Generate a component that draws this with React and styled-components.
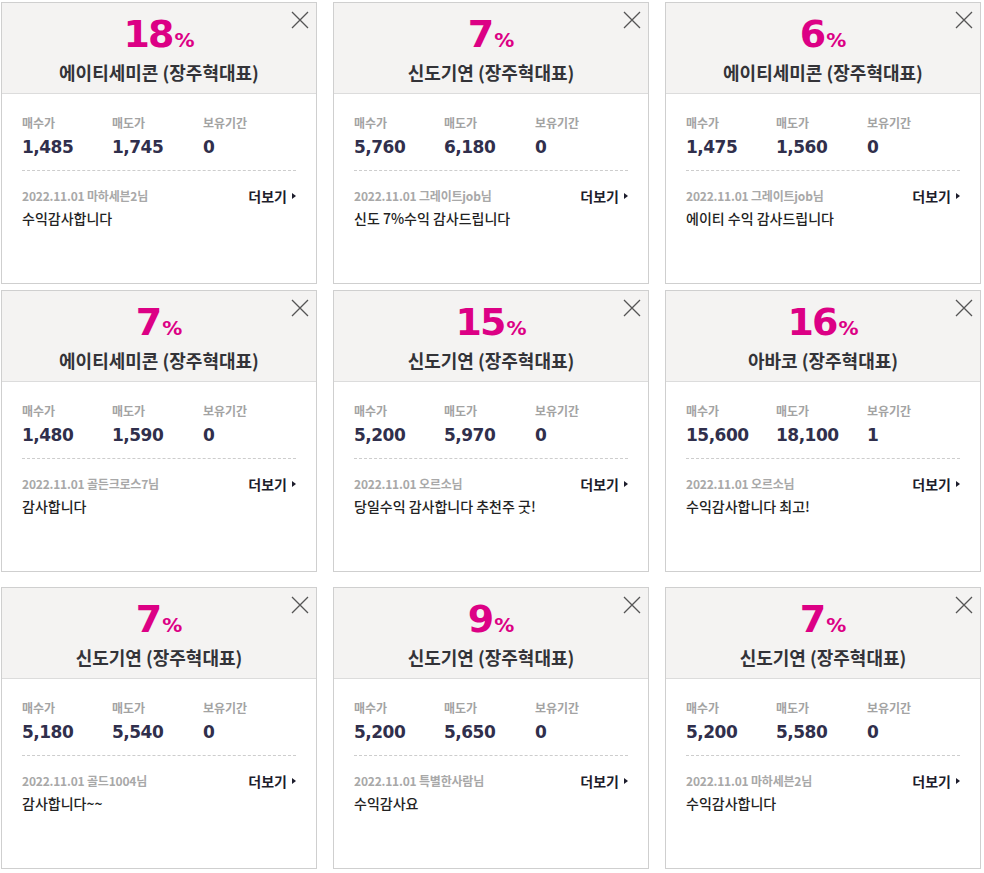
import React from 'react';
import styled, { createGlobalStyle } from 'styled-components';

const GlobalStyle = createGlobalStyle`
  body {
    margin: 0;
    background: #fff;
    font-family: "Noto Sans CJK KR", "DejaVu Sans", sans-serif;
  }
`;

const reviews = [
  { rate: 18, name: '에이티세미콘 (장주혁대표)', buy: '1,485', sell: '1,745', hold: '0', date: '2022.11.01', user: '마하세븐2님', text: '수익감사합니다' },
  { rate: 7, name: '신도기연 (장주혁대표)', buy: '5,760', sell: '6,180', hold: '0', date: '2022.11.01', user: '그레이트job님', text: '신도 7%수익 감사드립니다' },
  { rate: 6, name: '에이티세미콘 (장주혁대표)', buy: '1,475', sell: '1,560', hold: '0', date: '2022.11.01', user: '그레이트job님', text: '에이티 수익 감사드립니다' },
  { rate: 7, name: '에이티세미콘 (장주혁대표)', buy: '1,480', sell: '1,590', hold: '0', date: '2022.11.01', user: '골든크로스7님', text: '감사합니다' },
  { rate: 15, name: '신도기연 (장주혁대표)', buy: '5,200', sell: '5,970', hold: '0', date: '2022.11.01', user: '오르소님', text: '당일수익 감사합니다 추천주 굿!' },
  { rate: 16, name: '아바코 (장주혁대표)', buy: '15,600', sell: '18,100', hold: '1', date: '2022.11.01', user: '오르소님', text: '수익감사합니다 최고!' },
  { rate: 7, name: '신도기연 (장주혁대표)', buy: '5,180', sell: '5,540', hold: '0', date: '2022.11.01', user: '골드1004님', text: '감사합니다~~' },
  { rate: 9, name: '신도기연 (장주혁대표)', buy: '5,200', sell: '5,650', hold: '0', date: '2022.11.01', user: '특별한사람님', text: '수익감사요' },
  { rate: 7, name: '신도기연 (장주혁대표)', buy: '5,200', sell: '5,580', hold: '0', date: '2022.11.01', user: '마하세븐2님', text: '수익감사합니다' },
];

const Page = styled.div`
  padding: 2px 0 0 1px;
  display: flex;
  flex-direction: column;
`;

const Row = styled.ul`
  list-style: none;
  margin: ${(p) => p.$top}px 0 0;
  padding: 0;
  display: grid;
  grid-template-columns: repeat(3, 316px);
  column-gap: 16px;
`;

const Card = styled.li`
  position: relative;
  box-sizing: border-box;
  height: 282px;
  border: 1px solid #cfcfcf;
  background: #fff;
`;

const Head = styled.div`
  padding: 11px 0 9px;
  background: #f4f3f2;
  border-bottom: 1px solid #dcdcdc;
  text-align: center;
`;

const Rate = styled.div`
  height: 40px;
  line-height: 40px;
  font-family: "DejaVu Sans", sans-serif;
  font-weight: 700;
  font-size: 38px;
  letter-spacing: -2px;
  color: #dc0085;

  small {
    font-size: 20px;
    letter-spacing: 0;
    margin-left: 2px;
  }
`;

const Title = styled.h3`
  margin: 6px 0 0;
  line-height: 24px;
  font-size: 18px;
  font-weight: 700;
  color: #333338;
`;

const Close = styled.button`
  position: absolute;
  top: 8px;
  right: 7px;
  width: 18px;
  height: 18px;
  padding: 0;
  border: 0;
  background: none;
  cursor: pointer;

  svg {
    display: block;
  }
`;

const Body = styled.div`
  padding: 21px 20px 0;
`;

const Stats = styled.dl`
  margin: 0;
  display: grid;
  grid-template-columns: 90px 91px 1fr;
`;

const Stat = styled.div`
  dt {
    line-height: 16px;
    font-size: 12px;
    font-weight: 700;
    color: #a3a3a3;
  }
  dd {
    margin: 4px 0 0;
    line-height: 24px;
    font-family: "DejaVu Sans", sans-serif;
    font-size: 17px;
    font-weight: 700;
    letter-spacing: -0.5px;
    color: #302f4c;
  }
`;

const Divider = styled.hr`
  margin: 11px 0 0;
  border: 0;
  border-top: 1px dashed #cdcdcd;
`;

const Meta = styled.div`
  margin-top: 16px;
  display: flex;
  justify-content: space-between;
  align-items: center;
  line-height: 18px;
`;

const Writer = styled.span`
  font-size: 12px;
  font-weight: 700;
  color: #a8a8a8;
  letter-spacing: -0.2px;
`;

const More = styled.a`
  display: flex;
  align-items: center;
  gap: 5px;
  font-size: 14px;
  font-weight: 700;
  color: #1d1d2c;
  cursor: pointer;

  &::after {
    content: '';
    border-left: 4px solid #1d1d2c;
    border-top: 3.5px solid transparent;
    border-bottom: 3.5px solid transparent;
  }
`;

const Message = styled.p`
  margin: 4px 0 0;
  line-height: 18px;
  font-size: 14px;
  font-weight: 500;
  color: #222;
`;

const CloseIcon = () => (
  <svg width="18" height="18" viewBox="0 0 18 18">
    <path d="M1 1L17 17M17 1L1 17" stroke="#555" strokeWidth="1.3" fill="none" />
  </svg>
);

const ReviewCard = ({ r }) => (
  <Card>
    <Head>
      <Rate>
        {r.rate}
        <small>%</small>
      </Rate>
      <Title>{r.name}</Title>
    </Head>
    <Close aria-label="닫기">
      <CloseIcon />
    </Close>
    <Body>
      <Stats>
        <Stat>
          <dt>매수가</dt>
          <dd>{r.buy}</dd>
        </Stat>
        <Stat>
          <dt>매도가</dt>
          <dd>{r.sell}</dd>
        </Stat>
        <Stat>
          <dt>보유기간</dt>
          <dd>{r.hold}</dd>
        </Stat>
      </Stats>
      <Divider />
      <Meta>
        <Writer>
          {r.date} {r.user}
        </Writer>
        <More>더보기</More>
      </Meta>
      <Message>{r.text}</Message>
    </Body>
  </Card>
);

const rowTops = [0, 6, 15];

export default function App() {
  return (
    <>
      <GlobalStyle />
      <Page>
        {rowTops.map((top, i) => (
          <Row key={i} $top={top}>
            {reviews.slice(i * 3, i * 3 + 3).map((r, j) => (
              <ReviewCard key={j} r={r} />
            ))}
          </Row>
        ))}
      </Page>
    </>
  );
}
